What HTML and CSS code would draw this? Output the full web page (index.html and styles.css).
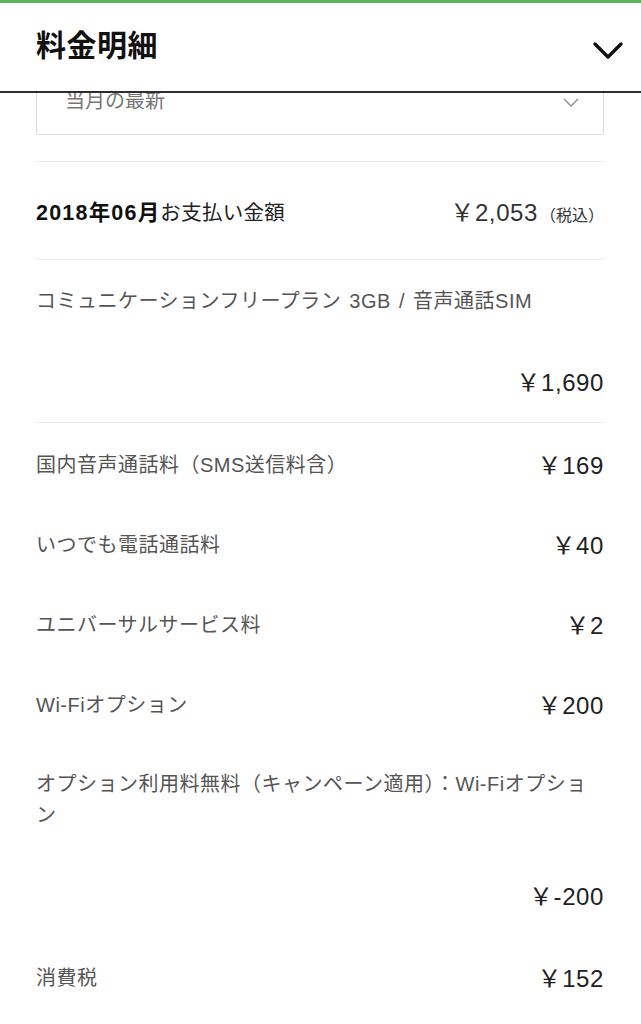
FILE: index.html
```html
<!DOCTYPE html>
<html lang="ja">
<head>
<meta charset="utf-8">
<title>料金明細</title>
<link rel="stylesheet" href="styles.css">
</head>
<body>
<header class="app-header">
  <h1 class="app-title">料金明細</h1>
  <svg class="header-chevron" width="32" height="20" viewBox="0 0 32 20" aria-hidden="true">
    <path d="M3 3 L16 16 L29 3" fill="none" stroke="#111" stroke-width="3.4" stroke-linecap="round" stroke-linejoin="round"/>
  </svg>
</header>
<main class="content">
  <div class="month-select">
    <span class="month-select-text">当月の最新</span>
    <svg class="select-chevron" width="16" height="9" viewBox="0 0 16 9" aria-hidden="true">
      <path d="M1 1 L8 8 L15 1" fill="none" stroke="#8a8a8a" stroke-width="1.3"/>
    </svg>
  </div>

  <div class="divider first-divider"></div>

  <div class="total-row">
    <div class="total-label"><span class="total-month">2018年06月</span>お支払い金額</div>
    <div class="total-amount">￥2,053<span class="tax-note">（税込）</span></div>
  </div>

  <div class="divider"></div>

  <div class="plan-row">
    <div class="item-label plan-label">コミュニケーションフリープラン 3GB / 音声通話SIM</div>
    <div class="amount block-amount">￥1,690</div>
  </div>

  <div class="divider"></div>

  <div class="item-row">
    <div class="item-label">国内音声通話料（SMS送信料含）</div>
    <div class="amount">￥169</div>
  </div>
  <div class="item-row">
    <div class="item-label">いつでも電話通話料</div>
    <div class="amount">￥40</div>
  </div>
  <div class="item-row">
    <div class="item-label">ユニバーサルサービス料</div>
    <div class="amount">￥2</div>
  </div>
  <div class="item-row">
    <div class="item-label">Wi-Fiオプション</div>
    <div class="amount">￥200</div>
  </div>
  <div class="block-row">
    <div class="item-label wrap-label">オプション利用料無料（キャンペーン適用）：Wi-Fiオプション</div>
    <div class="amount block-amount">￥-200</div>
  </div>
  <div class="item-row">
    <div class="item-label">消費税</div>
    <div class="amount">￥152</div>
  </div>
</main>
</body>
</html>
```

FILE: styles.css
```css
html, body {
  margin: 0;
  padding: 0;
  background: #ffffff;
}

body {
  font-family: "Liberation Sans", "Noto Sans CJK JP", sans-serif;
  color: #222;
}

.app-header {
  position: fixed;
  top: 0;
  left: 0;
  right: 0;
  z-index: 10;
  height: 88px;
  background: #fff;
  border-top: 3px solid #5fb35d;
  border-bottom: 2px solid #2e2e2e;
  display: flex;
  align-items: center;
  justify-content: space-between;
  padding: 0 17px 0 36px;
}

.app-title {
  margin: 0 0 8px;
  font-size: 30px;
  font-weight: 700;
  color: #111;
  letter-spacing: 0.5px;
}

.header-chevron {
  display: block;
  margin-top: 8px;
}

.content {
  padding: 65px 37px 40px 36px;
}

.month-select {
  height: 70px;
  box-sizing: border-box;
  border: 1px solid #dcdcdc;
  border-radius: 2px;
  display: flex;
  align-items: flex-start;
  justify-content: space-between;
  padding: 21px 24px 0 28px;
}

.month-select-text {
  font-size: 20px;
  line-height: 28px;
  color: #777;
}

.select-chevron {
  margin-top: 11px;
}

.divider {
  height: 1px;
  background: #ececec;
}

.first-divider {
  margin-top: 26px;
}

.total-row {
  height: 97px;
  display: flex;
  align-items: center;
  justify-content: space-between;
}

.total-label {
  font-size: 20.5px;
  color: #222;
  letter-spacing: 0.3px;
}

.total-month {
  font-size: 21.5px;
  font-weight: 700;
  letter-spacing: 1.2px;
  color: #111;
}

.total-amount {
  font-size: 24px;
  letter-spacing: 0.6px;
  color: #333;
  display: flex;
  align-items: baseline;
}

.tax-note {
  font-size: 16px;
  letter-spacing: 0;
  margin-left: 2px;
}

.plan-row {
  padding: 26px 0 24px;
}

.block-row {
  padding: 26px 0 24px;
}

.item-row {
  height: 80px;
  box-sizing: border-box;
  padding-top: 4px;
  display: flex;
  align-items: center;
  justify-content: space-between;
}

.item-label {
  font-size: 20px;
  line-height: 31px;
  letter-spacing: 0.5px;
  color: #555;
}

.plan-label {
  word-spacing: 2px;
}

.amount {
  font-size: 24px;
  line-height: 31px;
  letter-spacing: 0.6px;
  color: #222;
  white-space: nowrap;
}

.block-amount {
  text-align: right;
  margin-top: 50px;
}
```
